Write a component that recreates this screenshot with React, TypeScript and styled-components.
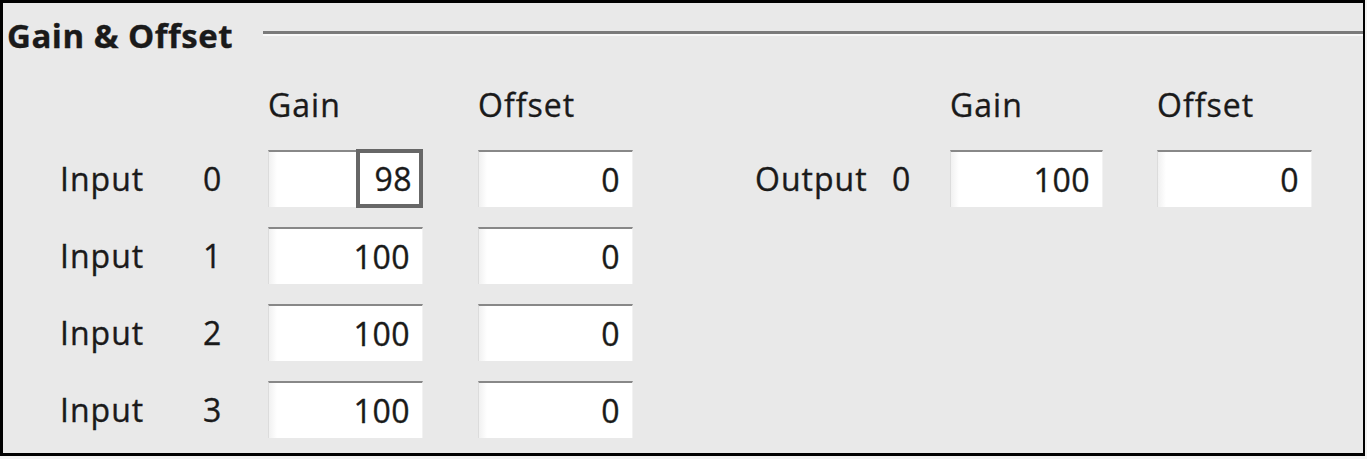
import React from "react";
import styled, { createGlobalStyle } from "styled-components";

const Global = createGlobalStyle`
  html, body { margin: 0; padding: 0; background: #f3f3f3; }
  body {
    font-family: "Open Sans", "Noto Sans", sans-serif;
    color: #1a1a1a;
    -webkit-text-stroke: 0.35px #1a1a1a;
  }
`;

const Frame = styled.div`
  box-sizing: border-box;
  width: 1365px;
  height: 456px;
  border: 3px solid #000;
  border-right-width: 2px;
  background: #e9e9e9;
  display: flex;
  flex-direction: column;
  overflow: hidden;
`;

const TitleRow = styled.div`
  display: flex;
  align-items: center;
  height: 58px;
  padding-left: 4px;
  gap: 30px;
`;

const Title = styled.div`
  font-weight: 700;
  font-size: 33px;
  letter-spacing: 0.5px;
  line-height: 1;
  margin-top: 6px;
`;

const Rule = styled.div`
  flex: 1;
  height: 0;
  border-top: 3px solid #7a7a7a;
  border-bottom: 2px solid #f8f8f8;
  margin-top: 2px;
`;

const Body = styled.div`
  display: flex;
  padding-left: 57px;
  padding-top: 31px;
`;

const Group = styled.div<{ $cols: string; $rows: number }>`
  display: grid;
  grid-template-columns: ${(p) => p.$cols};
  grid-template-rows: 38px repeat(${(p) => p.$rows}, 57px);
  row-gap: 20px;
  align-items: center;
`;

const Head = styled.div`
  align-self: start;
  font-size: 32px;
  letter-spacing: 1px;
  line-height: 32px;
  margin-top: -3px;
`;

const Label = styled.div`
  font-size: 32px;
  letter-spacing: 1px;
  line-height: 32px;
`;

const Field = styled.div<{ $w: number }>`
  box-sizing: border-box;
  width: ${(p) => p.$w}px;
  height: 57px;
  border-top: 2px solid #888888;
  border-left: 1px solid #dcdcdc;
  border-right: 1px solid #f2f2f2;
  background: linear-gradient(to right, #f1f1f1 0px, #ffffff 8px);
  display: flex;
  align-items: center;
  justify-content: flex-end;
  padding-right: 12px;
  font-size: 32px;
  letter-spacing: 0.5px;
  line-height: 1;
`;

const EditBox = styled.div`
  box-sizing: border-box;
  height: 59px;
  width: 67px;
  margin-top: -2px;
  margin-right: -13px;
  border: 4px solid #676767;
  background: #fff;
  display: flex;
  align-items: center;
  justify-content: flex-end;
  padding-right: 7px;
`;

const Spacer = styled.div`
  width: 122px;
`;

type Row = { label: string; idx: string; gain: string; offset: string; editing?: boolean };

const inputs: Row[] = [
  { label: "Input", idx: "0", gain: "98", offset: "0", editing: true },
  { label: "Input", idx: "1", gain: "100", offset: "0" },
  { label: "Input", idx: "2", gain: "100", offset: "0" },
  { label: "Input", idx: "3", gain: "100", offset: "0" },
];

const outputs: Row[] = [{ label: "Output", idx: "0", gain: "100", offset: "0" }];

function ChannelGroup({ rows, cols, fw }: { rows: Row[]; cols: string; fw: [number, number] }) {
  return (
    <Group $cols={cols} $rows={rows.length}>
      <div />
      <div />
      <Head>Gain</Head>
      <Head>Offset</Head>
      {rows.map((r) => (
        <React.Fragment key={r.label + r.idx}>
          <Label>{r.label}</Label>
          <Label>{r.idx}</Label>
          <Field $w={fw[0]}>{r.editing ? <EditBox>{r.gain}</EditBox> : r.gain}</Field>
          <Field $w={fw[1]}>{r.offset}</Field>
        </React.Fragment>
      ))}
    </Group>
  );
}

export default function App() {
  return (
    <>
      <Global />
      <Frame>
        <TitleRow>
          <Title>Gain &amp; Offset</Title>
          <Rule />
        </TitleRow>
        <Body>
          <ChannelGroup rows={inputs} cols="143px 65px 210px 155px" fw={[155, 155]} />
          <Spacer />
          <ChannelGroup rows={outputs} cols="137px 58px 207px 155px" fw={[153, 155]} />
        </Body>
      </Frame>
    </>
  );
}
